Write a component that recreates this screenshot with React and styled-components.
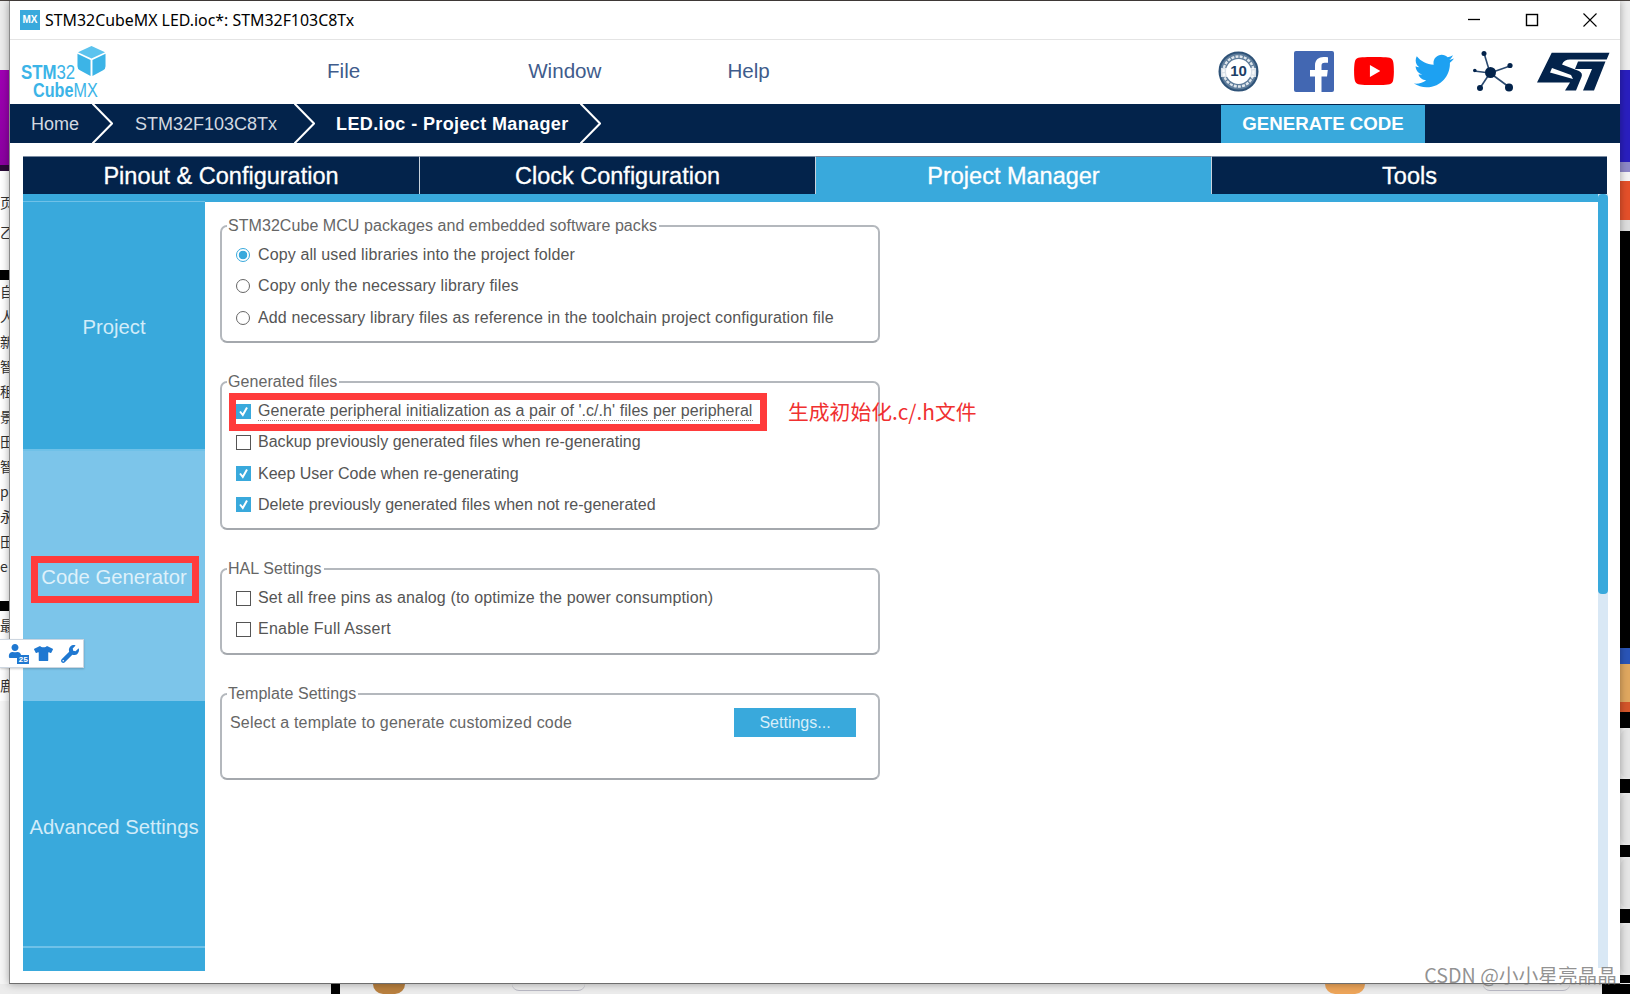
import React from 'react';
import styled, { createGlobalStyle } from 'styled-components';
import { FaYoutube, FaTwitter, FaTshirt, FaWrench, FaUser } from 'react-icons/fa';

const navy = '#03234b';
const blue = '#39a9dc';
const pale = '#7cc5ea';
const red = '#ff3b3b';

const GlobalStyle = createGlobalStyle`
  html, body {
    margin: 0;
    padding: 0;
    background: #f0f0f0;
    font-family: "Liberation Sans", Arial, sans-serif;
  }
`;

const Page = styled.div`
  position: relative;
  width: 1630px;
  height: 994px;
  overflow: hidden;
  display: flex;
  flex-direction: column;
  background: #f0f0f0;
`;

const TopEdge = styled.div`
  height: 1px;
  background: #4a4340;
`;

const Desktop = styled.div`
  display: flex;
  height: 983px;
`;

const Strip = styled.div`
  width: ${(p) => p.$w}px;
  display: flex;
  flex-direction: column;
  overflow: hidden;
`;

const Slice = styled.div`
  height: ${(p) => p.$h}px;
  flex: none;
  background: ${(p) => p.$bg || 'transparent'};
  color: #333;
  font: 14px/1 "Noto Sans CJK SC", sans-serif;
  display: flex;
  align-items: center;
  padding-bottom: ${(p) => (p.$ch ? '3px' : '0')};
  box-sizing: border-box;
  border-radius: ${(p) => (p.$round ? '24px 0 0 24px' : '0')};
  overflow: hidden;
`;

const BottomEdge = styled.div`
  height: 10px;
  display: flex;
  background: #ececec;
`;

const BottomGap = styled.div`
  width: ${(p) => p.$w}px;
  box-sizing: border-box;
  background: ${(p) => p.$bg || 'transparent'};
  border-radius: ${(p) => (p.$pill ? '0 0 24px 24px' : '0')};
  border-bottom: ${(p) => (p.$outline ? '1px solid #b9b9c4' : 'none')};
  margin-bottom: ${(p) => (p.$outline ? '3px' : '0')};
`;

const Window = styled.div`
  width: 1611px;
  height: 983px;
  box-sizing: border-box;
  position: relative;
  z-index: 1;
  background: #fff;
  border-left: 1px solid #8a8a8a;
  border-bottom: 1px solid #6e6e6e;
  box-shadow: 0 0 8px rgba(0, 0, 0, 0.35);
  display: flex;
  flex-direction: column;
`;

const TitleBar = styled.div`
  height: 38px;
  flex: none;
  display: flex;
  align-items: center;
  padding-left: 10px;
  border-bottom: 1px solid #e4e4e4;
  color: #000;
  font: 15.9px "Noto Sans", sans-serif;
`;

const AppIcon = styled.div`
  width: 20px;
  height: 20px;
  margin-right: 5px;
  background: ${blue};
  color: #fff;
  font: bold 10px/20px "Liberation Sans", sans-serif;
  text-align: center;
`;

const WindowControls = styled.div`
  margin-left: auto;
  margin-right: 1px;
  display: flex;
  svg {
    width: 58px;
    height: 14px;
    stroke: #000;
    fill: none;
  }
`;

const MenuBar = styled.div`
  height: 64px;
  flex: none;
  display: flex;
  align-items: center;
`;

const Logo = styled.div`
  position: relative;
  width: 97px;
  height: 52px;
  box-sizing: border-box;
  margin-left: 10px;
  padding-top: 17px;
  color: #3cb4e7;
  svg {
    position: absolute;
    left: 57px;
    top: 0;
    width: 29px;
    height: 31px;
  }
`;

const LogoLine = styled.div`
  margin-left: ${(p) => p.$left}px;
  font: 20px/18px "Liberation Sans", sans-serif;
  transform: scaleX(${(p) => p.$squeeze});
  transform-origin: left;
  white-space: nowrap;
`;

const MenuItem = styled.div`
  margin-left: ${(p) => p.$left}px;
  padding-bottom: 3px;
  color: #3f5c8c;
  font-size: 20.6px;
`;

const SocialIcons = styled.div`
  margin-left: auto;
  display: flex;
  align-items: center;
  margin-right: 10px;
  padding-bottom: 2px;
`;

const IconSlot = styled.div`
  display: flex;
  margin-left: ${(p) => p.$left}px;
`;

const Crumbs = styled.div`
  height: 39px;
  flex: none;
  display: flex;
  align-items: center;
  background: ${navy};
`;

const Crumb = styled.div`
  margin-left: ${(p) => p.$left}px;
  margin-right: ${(p) => p.$right}px;
  padding-top: 1px;
  color: ${(p) => (p.$current ? '#fff' : '#d3d9e1')};
  font-size: 18px;
  font-weight: ${(p) => (p.$current ? 'bold' : 'normal')};
  letter-spacing: ${(p) => (p.$current ? '0.38px' : '0')};
  white-space: nowrap;
`;

const Chevron = styled.svg`
  width: 21px;
  height: 39px;
  flex: none;
  fill: none;
  stroke: #fff;
  stroke-width: 2;
`;

const GenerateButton = styled.div`
  margin-left: auto;
  margin-right: 195px;
  width: 204px;
  height: 38px;
  background: ${blue};
  color: #fff;
  font-size: 18.7px;
  font-weight: bold;
  line-height: 38px;
  text-align: center;
`;

const Tabs = styled.div`
  flex: none;
  display: grid;
  grid-template-columns: repeat(4, 396px);
  height: 38px;
  margin: 13px 0 0 13px;
  width: 1584px;
`;

const Tab = styled.div`
  background: ${(p) => (p.$active ? blue : navy)};
  border-left: ${(p) => (p.$first ? 'none' : '1px solid #c9d2dc')};
  border-top: 1px solid #7a8ba1;
  box-sizing: border-box;
  color: #fff;
  font-size: 23.5px;
  line-height: 38px;
  text-align: center;
  -webkit-text-stroke: 0.3px #fff;
`;

const Work = styled.div`
  flex: none;
  height: 769px;
  margin-left: 13px;
  width: 1585px;
  display: flex;
  position: relative;
  border-top: 8px solid ${blue};
`;

const Sidebar = styled.div`
  width: 182px;
  flex: none;
  display: flex;
  flex-direction: column;
  background: ${blue};
  box-shadow: 0 -1px 0 #6fc1e8;
`;

const SideItem = styled.div`
  height: ${(p) => p.$h}px;
  flex: none;
  box-sizing: border-box;
  padding-top: ${(p) => p.$drop}px;
  display: flex;
  align-items: center;
  justify-content: center;
  position: relative;
  background: ${(p) => (p.$active ? pale : blue)};
  border-bottom: ${(p) => (p.$line ? '2px solid #6fc1e8' : 'none')};
  color: ${(p) => (p.$active ? '#dff1fa' : '#d2ecf9')};
  font-size: 20.3px;
  white-space: nowrap;
`;

const SideMark = styled.div`
  position: absolute;
  left: 8px;
  top: 105px;
  width: 168px;
  height: 47px;
  box-sizing: border-box;
  border: 7px solid ${red};
`;

const Form = styled.div`
  flex: 1;
  display: flex;
  flex-direction: column;
  gap: 29px;
  padding: 14px 0 0 15px;
`;

const Group = styled.fieldset`
  width: 660px;
  height: ${(p) => p.$h}px;
  box-sizing: border-box;
  margin: 0;
  padding: 3.6px 0 0;
  border: 2px solid #b4b8bd;
  border-bottom-color: #a4a8ad;
  border-radius: 7px;
`;

const GroupTitle = styled.legend`
  margin-left: 5px;
  padding: 0 2px 0 1px;
  color: #666;
  font-size: 16px;
  line-height: 20px;
  letter-spacing: 0.06px;
`;

const Row = styled.div`
  position: relative;
  height: 31.2px;
  display: flex;
  align-items: center;
  padding-left: 14px;
  color: #555;
  font-size: 16px;
  white-space: nowrap;
`;

const RowLabel = styled.span`
  margin-left: 7px;
  border-bottom: ${(p) => (p.$focus ? '1px dotted #888' : 'none')};
  letter-spacing: ${(p) => p.$track}px;
`;

const Radio = styled.span`
  width: 14px;
  height: 14px;
  flex: none;
  margin-right: 1px;
  box-sizing: border-box;
  border-radius: 50%;
  border: ${(p) => (p.$on ? `1px solid ${blue}` : '1.5px solid #666')};
  background: ${(p) =>
    p.$on ? `radial-gradient(circle, ${blue} 0 4px, #fff 4.6px)` : '#fff'};
`;

const Check = styled.span`
  width: 15px;
  height: 15px;
  flex: none;
  box-sizing: border-box;
  display: flex;
  background: ${(p) => (p.$on ? blue : '#fff')};
  border: ${(p) => (p.$on ? 'none' : '1.5px solid #555')};
  svg {
    width: 15px;
    height: 15px;
    fill: none;
    stroke: #fff;
    stroke-width: 2;
  }
`;

const RowMark = styled.div`
  position: absolute;
  left: 7px;
  top: -3px;
  width: 538px;
  height: 38px;
  box-sizing: border-box;
  border: 7px solid ${red};
`;

const Note = styled.div`
  position: absolute;
  left: 566px;
  top: 0;
  color: #f03030;
  font: 20.8px/30px "Noto Sans CJK SC", sans-serif;
`;

const TemplateRow = styled.div`
  display: flex;
  justify-content: space-between;
  align-items: center;
  padding: 0 22px 0 8px;
`;

const TemplateText = styled.span`
  padding-top: 2px;
  color: #666;
  font-size: 16px;
  letter-spacing: 0.19px;
`;

const SettingsButton = styled.div`
  width: 122px;
  height: 29px;
  background: ${blue};
  color: #d8eef9;
  font-size: 16px;
  line-height: 29px;
  text-align: center;
`;

const Scroll = styled.div`
  position: absolute;
  right: 0;
  top: -8px;
  bottom: 3px;
  width: 10px;
  background: #d9e8f5;
`;

const ScrollThumb = styled.div`
  height: 400px;
  background: ${blue};
  border-radius: 4px;
`;

const FloatBar = styled.div`
  position: absolute;
  left: 0;
  top: 639px;
  z-index: 3;
  width: 84px;
  height: 29px;
  box-sizing: border-box;
  padding-left: 8px;
  display: flex;
  align-items: center;
  gap: 5px;
  background: #fff;
  border: 1px solid #cdd6e0;
  border-left: none;
  color: #1f78d1;
  box-shadow: 0 1px 2px rgba(0, 0, 0, 0.2);
`;

const UserBadge = styled.div`
  position: relative;
  width: 21px;
  height: 20px;
  display: flex;
  align-items: flex-start;
  span {
    position: absolute;
    right: 0;
    bottom: 0;
    background: #1f78d1;
    color: #fff;
    font: bold 8px/9px "Liberation Mono", monospace;
    padding: 0 1px;
  }
`;

const Watermark = styled.div`
  position: absolute;
  right: 13px;
  bottom: 5px;
  z-index: 4;
  color: rgba(110, 110, 110, 0.75);
  font: 19.7px "Noto Sans CJK SC", sans-serif;
  white-space: nowrap;
`;

const leftSlices = [
  { h: 69, bg: '#ececec' },
  { h: 95, bg: 'linear-gradient(#a000b4, #8a00a0)' },
  { h: 6, bg: '#2a0a38' },
  { h: 19, bg: '#fff' },
  { h: 26, bg: '#fff', ch: '页' },
  { h: 34, bg: '#fff', ch: '乙' },
  { h: 20, bg: '#fff' },
  { h: 10, bg: '#000' },
  { h: 25, bg: '#fff', ch: '自' },
  { h: 25, bg: '#fff', ch: '人' },
  { h: 25, bg: '#fff', ch: '新' },
  { h: 25, bg: '#fff', ch: '智' },
  { h: 25, bg: '#fff', ch: '租' },
  { h: 25, bg: '#fff', ch: '景' },
  { h: 25, bg: '#fff', ch: '田' },
  { h: 25, bg: '#fff', ch: '智' },
  { h: 25, bg: '#fff', ch: 'p' },
  { h: 25, bg: '#fff', ch: '永' },
  { h: 25, bg: '#fff', ch: '田' },
  { h: 25, bg: '#fff', ch: 'e' },
  { h: 21, bg: '#fff' },
  { h: 10, bg: '#000' },
  { h: 30, bg: '#fff', ch: '最' },
  { h: 30, bg: '#fff' },
  { h: 30, bg: '#fff', ch: '鹿' },
  { h: 300, bg: '#f6f6f6' },
];

const rightSlices = [
  { h: 69, bg: '#eeeeee' },
  { h: 92, bg: '#2a1fbf' },
  { h: 10, bg: '#8d88c8' },
  { h: 9, bg: '#f4f4f4' },
  { h: 39, bg: '#e5502a' },
  { h: 11, bg: '#dedede' },
  { h: 417, bg: '#000' },
  { h: 64, bg: 'linear-gradient(#2a55b8 0 25%, #e0a860 25% 85%, #d5562a 85%)' },
  { h: 16, bg: '#000' },
  { h: 51, bg: '#e6e6e6', round: true },
  { h: 14, bg: '#000' },
  { h: 52, bg: '#e6e6e6', round: true },
  { h: 12, bg: '#000' },
  { h: 52, bg: '#e6e6e6', round: true },
  { h: 14, bg: '#000' },
  { h: 52, bg: '#e6e6e6', round: true },
  { h: 8, bg: '#000' },
];

const radios = [
  { label: 'Copy all used libraries into the project folder', on: true },
  { label: 'Copy only the necessary library files' },
  { label: 'Add necessary library files as reference in the toolchain project configuration file' },
];

const generated = [
  { label: "Generate peripheral initialization as a pair of '.c/.h' files per peripheral", on: true, marked: true, track: 0.06 },
  { label: 'Backup previously generated files when re-generating', track: 0.02 },
  { label: 'Keep User Code when re-generating', on: true, track: 0 },
  { label: 'Delete previously generated files when not re-generated', on: true, track: 0 },
];

const hal = [
  { label: 'Set all free pins as analog (to optimize the power consumption)', track: 0.14 },
  { label: 'Enable Full Assert', track: 0.22 },
];

const CheckBox = ({ on }) => (
  <Check $on={on}>
    {on && (
      <svg viewBox="0 0 15 15">
        <path d="M4 7.5 L6.8 11 L11 3.5" />
      </svg>
    )}
  </Check>
);

const CubeMark = () => (
  <svg viewBox="0 0 30 32">
    <path d="M15 0 L29 6.5 L15 13 L1 6.5 Z" fill="#5cc3ee" />
    <path d="M0.5 8 L14 14.5 L14 31 L3 25 Q0.5 24 0.5 21 Z" fill="#3cb4e7" />
    <path d="M29.5 8 L16 14.5 L16 31 L27 25 Q29.5 24 29.5 21 Z" fill="#3cb4e7" />
  </svg>
);

const Badge = () => (
  <svg width="41" height="41" viewBox="0 0 41 41">
    <circle cx="20.5" cy="20.5" r="19" fill="#5f7d9b" stroke="#2f5378" strokeWidth="2" />
    <circle cx="20.5" cy="20.5" r="15" fill="none" stroke="#dfe6ec" strokeWidth="2.4" strokeDasharray="3 1.2" />
    <circle cx="20.5" cy="20.5" r="12.5" fill="#fff" />
    <path d="M3 17 L38 17 L38 26 L3 26 Z" fill="#fff" opacity="0.75" />
    <text x="20.5" y="25" textAnchor="middle" fontFamily="Liberation Sans" fontWeight="bold" fontSize="15" fill="#1c3e66">
      10
    </text>
  </svg>
);

const Facebook = () => (
  <svg width="40" height="41" viewBox="0 0 40 41">
    <rect width="40" height="41" rx="2" fill="#4267b2" />
    <path d="M27.5 41 V25.5 H33 L33.8 19 H27.5 V15 C27.5 13 28.2 11.8 30.8 11.8 H34 V6.2 C33.2 6.1 31.6 6 29.6 6 C24.8 6 21 8.8 21 14.2 V19 H16 V25.5 H21 V41 Z" fill="#fff" />
  </svg>
);

const NetworkMark = () => (
  <svg width="41" height="41" viewBox="0 0 41 41">
    <g stroke="#2b4a70" strokeWidth="1.6">
      <path d="M17 22 L11 2" />
      <path d="M17 22 L1 20" />
      <path d="M17 22 L37 15" />
      <path d="M17 22 L7 37" />
      <path d="M17 22 L36 36" />
    </g>
    <g fill={navy}>
      <circle cx="17.5" cy="21.5" r="5.5" />
      <circle cx="11" cy="2.5" r="2.5" />
      <circle cx="1.8" cy="19.5" r="1.8" />
      <circle cx="37" cy="14.5" r="2.6" />
      <circle cx="7" cy="37" r="3" />
      <circle cx="36" cy="36.5" r="4" />
    </g>
  </svg>
);

const StMark = () => (
  <svg width="73" height="39" viewBox="0 0 73 39">
    <path
      fill={navy}
      d="M14.7 0.7 L72.5 0.7 L69.7 7.5 L33 7.5 Q27 7.5 25 12.5 L42 19 Q46 21 44.5 25 L39 38.5 L28 38.5 L33 30.5 L0 30.5 Z"
    />
    <path fill="#fff" d="M15 16 L34 23 L36 27 L13 20.5 Z" />
    <path fill={navy} d="M41 9.5 L68.5 9.5 L57 38.5 L46 38.5 L55 17 L38 17 Z" />
  </svg>
);

const Crumbmark = () => (
  <Chevron viewBox="0 0 21 39">
    <path d="M0 -1 L20 19.5 L0 40" />
  </Chevron>
);

const App = () => (
  <Page>
    <GlobalStyle />
    <TopEdge />
    <Desktop>
      <Strip $w={9}>
        {leftSlices.map((s, i) => (
          <Slice key={i} $h={s.h} $bg={s.bg} $ch={s.ch}>
            {s.ch}
          </Slice>
        ))}
      </Strip>
      <Window>
        <TitleBar>
          <AppIcon>MX</AppIcon>
          STM32CubeMX LED.ioc*: STM32F103C8Tx
          <WindowControls>
            <svg viewBox="0 0 58 14">
              <path d="M23 6.5 H35" strokeWidth="1.3" />
            </svg>
            <svg viewBox="0 0 58 14">
              <rect x="23.5" y="1.5" width="11" height="11" strokeWidth="1.4" />
            </svg>
            <svg viewBox="0 0 58 14">
              <path d="M22.5 0.5 L35.5 13.5 M35.5 0.5 L22.5 13.5" strokeWidth="1.1" />
            </svg>
          </WindowControls>
        </TitleBar>
        <MenuBar>
          <Logo>
            <CubeMark />
            <LogoLine $left={1} $squeeze={0.84}>
              <b>STM</b>32
            </LogoLine>
            <LogoLine $left={13} $squeeze={0.81}>
              <b>Cube</b>MX
            </LogoLine>
          </Logo>
          <MenuItem $left={210}>File</MenuItem>
          <MenuItem $left={168}>Window</MenuItem>
          <MenuItem $left={126}>Help</MenuItem>
          <SocialIcons>
            <IconSlot $left={0}>
              <Badge />
            </IconSlot>
            <IconSlot $left={35}>
              <Facebook />
            </IconSlot>
            <IconSlot $left={19}>
              <FaYoutube size={42} color="#ff0000" />
            </IconSlot>
            <IconSlot $left={19}>
              <FaTwitter size={40} color="#1da1f2" />
            </IconSlot>
            <IconSlot $left={19}>
              <NetworkMark />
            </IconSlot>
            <IconSlot $left={23}>
              <StMark />
            </IconSlot>
          </SocialIcons>
        </MenuBar>
        <Crumbs>
          <Crumb $left={21} $right={13}>Home</Crumb>
          <Crumbmark />
          <Crumb $left={22} $right={17}>STM32F103C8Tx</Crumb>
          <Crumbmark />
          <Crumb $left={21} $right={11} $current>LED.ioc - Project Manager</Crumb>
          <Crumbmark />
          <GenerateButton>GENERATE CODE</GenerateButton>
        </Crumbs>
        <Tabs>
          <Tab $first>Pinout &amp; Configuration</Tab>
          <Tab>Clock Configuration</Tab>
          <Tab $active>Project Manager</Tab>
          <Tab>Tools</Tab>
        </Tabs>
        <Work>
          <Sidebar>
            <SideItem $h={249} $line $drop={3}>Project</SideItem>
            <SideItem $h={250} $active $drop={3}>
              Code Generator
              <SideMark />
            </SideItem>
            <SideItem $h={247} $line $drop={7}>Advanced Settings</SideItem>
          </Sidebar>
          <Form>
            <Group $h={127}>
              <GroupTitle>STM32Cube MCU packages and embedded software packs</GroupTitle>
              {radios.map((r) => (
                <Row key={r.label}>
                  <Radio $on={r.on} />
                  <RowLabel $track={0.12}>{r.label}</RowLabel>
                </Row>
              ))}
            </Group>
            <Group $h={158}>
              <GroupTitle>Generated files</GroupTitle>
              {generated.map((r) => (
                <Row key={r.label}>
                  <CheckBox on={r.on} />
                  <RowLabel $focus={r.marked} $track={r.track}>{r.label}</RowLabel>
                  {r.marked && <RowMark />}
                  {r.marked && <Note>生成初始化.c/.h文件</Note>}
                </Row>
              ))}
            </Group>
            <Group $h={96}>
              <GroupTitle>HAL Settings</GroupTitle>
              {hal.map((r) => (
                <Row key={r.label}>
                  <CheckBox />
                  <RowLabel $track={r.track}>{r.label}</RowLabel>
                </Row>
              ))}
            </Group>
            <Group $h={96}>
              <GroupTitle>Template Settings</GroupTitle>
              <TemplateRow>
                <TemplateText>Select a template to generate customized code</TemplateText>
                <SettingsButton>Settings...</SettingsButton>
              </TemplateRow>
            </Group>
          </Form>
          <Scroll>
            <ScrollThumb />
          </Scroll>
        </Work>
      </Window>
      <Strip $w={10}>
        {rightSlices.map((s, i) => (
          <Slice key={i} $h={s.h} $bg={s.bg} $round={s.round} />
        ))}
      </Strip>
    </Desktop>
    <BottomEdge>
      <BottomGap $w={331} />
      <BottomGap $w={9} $bg="#000" />
      <BottomGap $w={33} />
      <BottomGap $w={32} $bg="#b9803f" $pill />
      <BottomGap $w={107} />
      <BottomGap $w={73} $pill $outline />
      <BottomGap $w={740} />
      <BottomGap $w={40} $bg="#eda55a" $pill />
      <BottomGap $w={118} />
      <BottomGap $w={87} $pill $outline />
      <BottomGap $w={32} />
      <BottomGap $w={28} $bg="#000" />
    </BottomEdge>
    <FloatBar>
      <UserBadge>
        <FaUser size={14} />
        <span>25</span>
      </UserBadge>
      <FaTshirt size={19} />
      <IconSlot $left={3}>
        <FaWrench size={18} />
      </IconSlot>
    </FloatBar>
    <Watermark>CSDN @小小星亮晶晶</Watermark>
  </Page>
);

export default App;
